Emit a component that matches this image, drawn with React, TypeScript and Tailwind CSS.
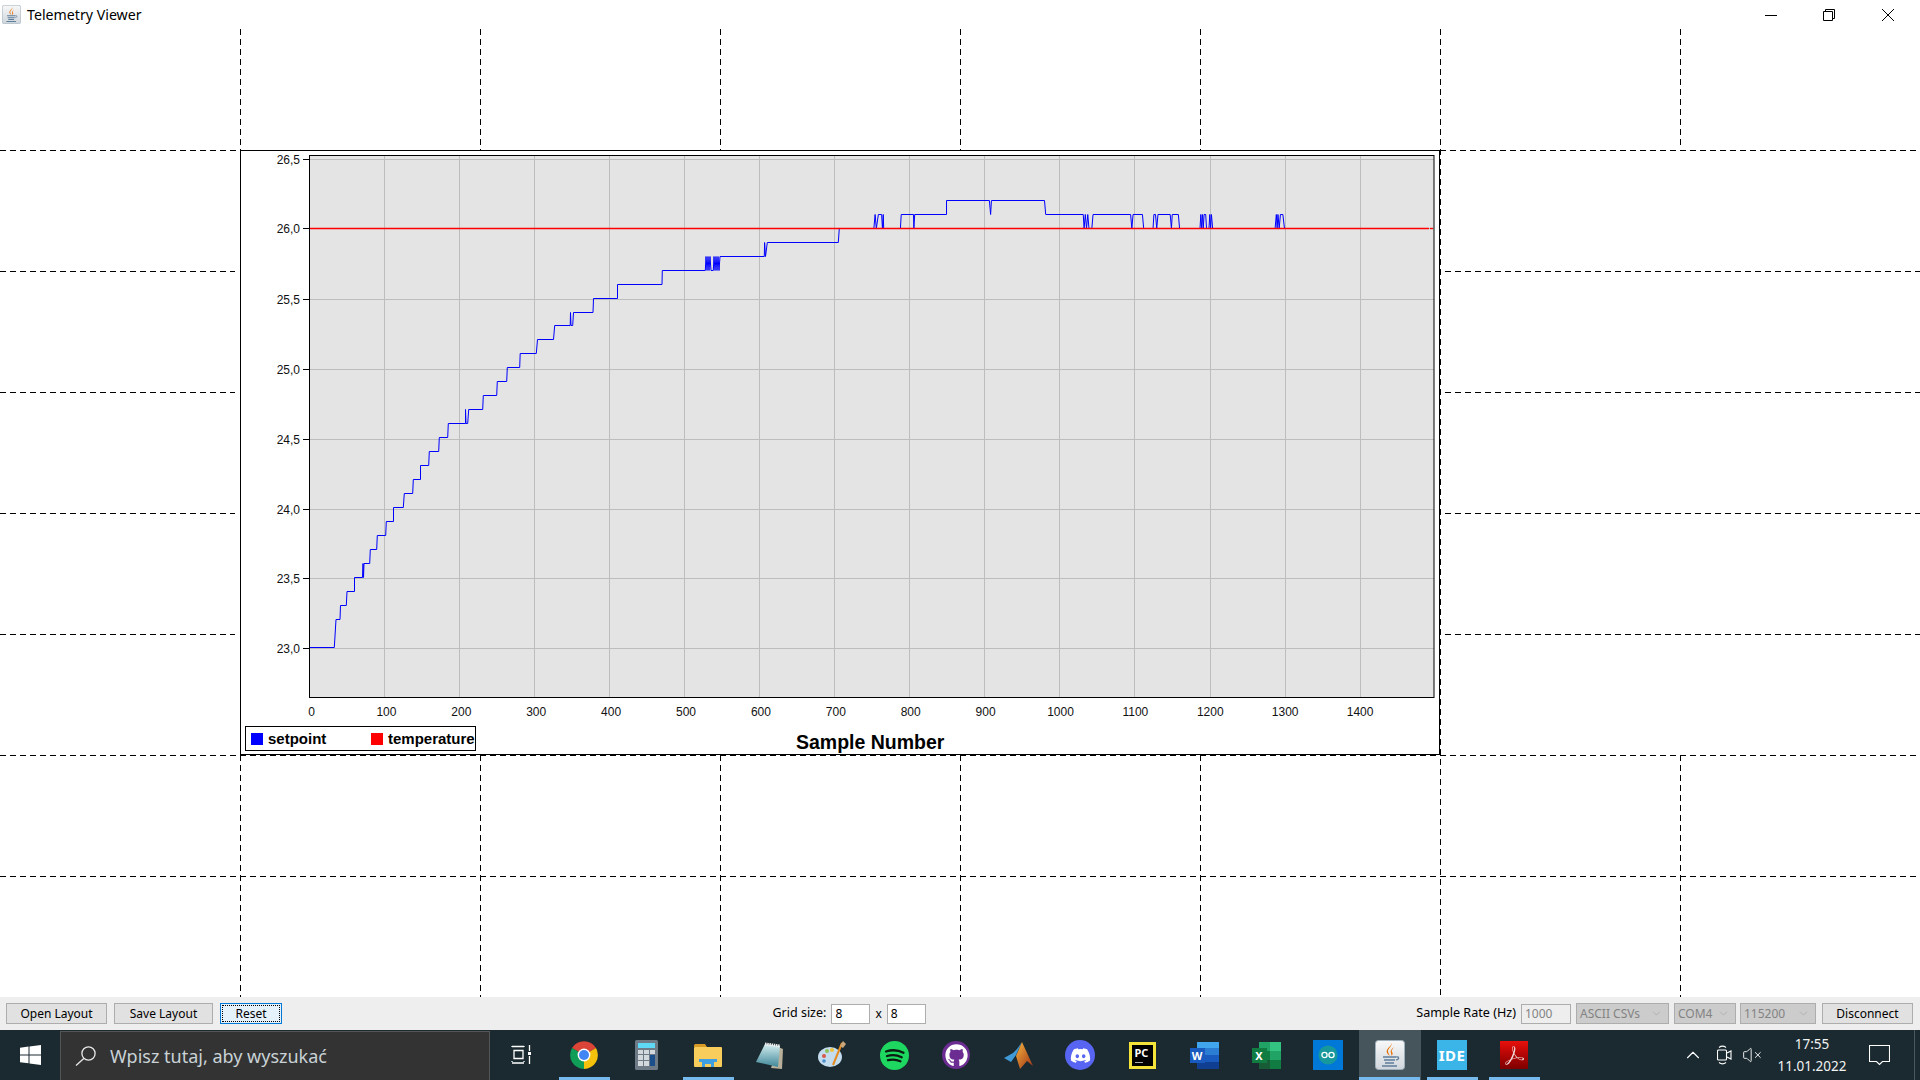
import { ChevronDown, ChevronUp, VolumeX } from "lucide-react";
import { FaDiscord, FaGithub } from "react-icons/fa";
import { SiAdobeacrobatreader } from "react-icons/si";
import type { ReactNode } from "react";

// helpers for the telemetry trace
const ky = (k: number) => Math.floor(647.3 - 13.97 * k) + 0.5;
const z3 = (p: number) => 820 + p / 2.45;

const lowerTrace: [number, number][] = [
  [309.5, 0], [334.3, 0], [336, 2], [340, 2], [340.5, 3], [346.3, 3], [347, 4], [354.5, 4], [354.5, 5],
  [362.5, 5], [363, 6], [363.5, 5], [364, 6], [369.7, 6], [370.3, 7], [376.7, 7], [377.3, 8], [385.7, 8],
  [386.3, 9], [393.5, 9], [393.5, 10], [403.3, 10], [404.3, 11], [412.7, 11], [413.3, 12], [420.5, 12],
  [420.5, 13], [428.7, 13], [429.3, 14], [438.7, 14], [439.3, 15], [447.7, 15], [448.3, 16], [465.5, 16],
  [465.5, 17], [466, 16], [467.7, 16], [468.7, 17], [482.7, 17], [483.3, 18], [496.7, 18], [497.3, 19],
  [506.7, 19], [507.3, 20], [519.7, 20], [520.2, 21], [536.3, 21], [537.5, 22], [553.5, 22], [554.7, 23],
  [570.2, 23], [570.5, 24], [571, 23], [572.7, 23], [573.5, 24], [593, 24], [593.5, 25], [617.5, 25],
  [617.5, 26], [662, 26], [662.3, 27], [705.3, 27], [706, 28], [707, 27], [708, 28], [709, 27],
  [710, 28], [711, 27], [713.3, 27], [714, 28], [715, 27], [716, 28], [717, 27], [718, 28], [719, 27], [720, 28],
  [764.3, 28], [764.6, 29], [765.5, 28], [767.3, 29], [838.3, 29], [839.3, 30],
];

const upperTrace: [number, number][] = [
  [132, 30], [135, 31], [138, 30], [143, 31], [151, 31], [153, 30], [155, 31], [156, 30], [197, 30], [199, 31],
  [229, 31], [230, 30], [232, 31], [310, 31], [310, 32], [415, 32], [418, 31], [420, 32], [550, 32], [553, 31],
  [645, 31], [647, 30], [650, 31], [653, 30], [656, 31], [659, 30], [666, 30], [669, 31], [761, 31], [764, 30],
  [767, 31], [790, 31], [793, 30], [816, 30], [818, 31], [822, 31], [825, 30], [828, 31], [858, 31], [861, 30],
  [863, 31], [878, 31], [881, 30], [931, 30], [933, 31], [935, 30], [937, 31], [939, 30], [941, 31], [945, 31],
  [947, 30], [953, 30], [955, 31], [957, 30], [959, 31], [962, 30], [1115, 30], [1118, 31], [1120, 30], [1122, 31],
  [1125, 30], [1128, 31], [1134, 31], [1138, 30], [1490, 30],
];

const tracePoints = [
  ...lowerTrace.map(([x, k]) => `${x},${ky(k)}`),
  ...upperTrace.map(([p, k]) => `${z3(p)},${ky(k)}`),
].join(" ");

const yTicks = [
  { label: "26,5", y: 159.5 },
  { label: "26,0", y: 228.5 },
  { label: "25,5", y: 299.5 },
  { label: "25,0", y: 369.5 },
  { label: "24,5", y: 439.5 },
  { label: "24,0", y: 509.5 },
  { label: "23,5", y: 578.5 },
  { label: "23,0", y: 648.5 },
];
const xTicks = [0, 100, 200, 300, 400, 500, 600, 700, 800, 900, 1000, 1100, 1200, 1300, 1400];

function GridLines() {
  const segs = [
    // horizontals
    [0, 150, 240, 150], [1440, 150, 1920, 150],
    [0, 271, 235, 271], [1445, 271, 1920, 271],
    [0, 392, 235, 392], [1445, 392, 1920, 392],
    [0, 513, 235, 513], [1445, 513, 1920, 513],
    [0, 634, 235, 634], [1445, 634, 1920, 634],
    [0, 755, 1920, 755], [0, 876, 1920, 876],
    // verticals
    [240, 29, 240, 150], [480, 29, 480, 150], [720, 29, 720, 150], [960, 29, 960, 150], [1200, 29, 1200, 150],
    [1440, 29, 1440, 997], [1680, 29, 1680, 146],
    [240, 755, 240, 997], [480, 755, 480, 997], [720, 755, 720, 997], [960, 755, 960, 997], [1200, 755, 1200, 997],
    [1680, 755, 1680, 997],
  ];
  return (
    <svg className="absolute inset-0 w-full h-full" viewBox="0 29 1920 968">
      {segs.map(([x1, y1, x2, y2], i) => (
        <line
          key={i}
          x1={x1 === x2 ? x1 + 0.5 : x1}
          y1={y1 === y2 ? y1 + 0.5 : y1}
          x2={x1 === x2 ? x2 + 0.5 : x2}
          y2={y1 === y2 ? y2 + 0.5 : y2}
          stroke="#000"
          strokeDasharray="6 4"
        />
      ))}
    </svg>
  );
}

function ChartPanel() {
  return (
    <div className="relative col-start-2 col-span-5 row-start-2 row-span-5 bg-white border border-black">
      <svg className="absolute -inset-px block w-[1200px] h-[605px]" viewBox="240 150 1200 605">
        <rect x="309.5" y="155.5" width="1124.5" height="542" fill="#e4e4e4" />
        {yTicks.map((t) => (
          <g key={t.label}>
            <line x1="310" x2="1434" y1={t.y} y2={t.y} stroke="#bdbdbd" />
            <line x1="303" x2="310" y1={t.y} y2={t.y} stroke="#000" />
            <text x="300" y={t.y + 4} textAnchor="end" fontSize="12" fill="#111">
              {t.label}
            </text>
          </g>
        ))}
        {xTicks.map((n) => {
          const x = Math.floor(309.4 + 0.7505 * n) + 0.5;
          return (
            <g key={n}>
              <line x1={x} x2={x} y1="156" y2="697" stroke="#bdbdbd" />
              <text x={311.5 + 0.749 * n} y="716" textAnchor="middle" fontSize="12" fill="#111">
                {n}
              </text>
            </g>
          );
        })}
        <polyline points={tracePoints} fill="none" stroke="#0000ff" strokeWidth="1" />
        <line x1="310" x2="1429" y1="228.5" y2="228.5" stroke="#ff0000" strokeWidth="1.4" />
        <line x1="1430" x2="1433" y1="228.5" y2="228.5" stroke="#ff0000" strokeWidth="1.4" />
        <rect x="309.5" y="155.5" width="1124.5" height="542" fill="none" stroke="#000" />
      </svg>
      {/* legend + axis title sit on top of the plot svg */}
      <div className="absolute left-[4px] top-[575px] w-[231px] h-[25px] flex items-center border border-black bg-white font-bold text-[15px] text-black">
        <span className="w-[12px] h-[12px] bg-[#0000ff] ml-[5px]" />
        <span className="ml-[5px] w-[103px] pt-px">setpoint</span>
        <span className="w-[12px] h-[12px] bg-[#ff0000]" />
        <span className="ml-[5px] pt-px whitespace-nowrap">temperature</span>
      </div>
      <div className="absolute left-[555px] top-[579px] font-bold text-[19.5px] leading-[24px] text-black whitespace-nowrap">
        Sample Number
      </div>
    </div>
  );
}

function JavaIcon({ size }: { size: number }) {
  return (
    <svg width={size} height={size} viewBox="0 0 30 30">
      <defs>
        <linearGradient id={`jv${size}`} x1="0" y1="0" x2="0" y2="1">
          <stop offset="0" stopColor="#f8f8f8" />
          <stop offset="1" stopColor="#cfd6dc" />
        </linearGradient>
      </defs>
      <rect x="0.5" y="0.5" width="29" height="29" rx="3" fill={`url(#jv${size})`} stroke="#9fb0bd" />
      <path d="M16 3c2 3-3 5-3 8 0 2 1 3 2 5-3-2-4-4-3-6 1-3 5-4 4-7z" fill="#e76f00" />
      <path d="M19 7c-2 2-4 3-3 6 0 1 1 2 0 3 2-1 2-3 1-4-1-2 1-3 2-5z" fill="#e76f00" />
      <path d="M8 17h13M9 20h11M10 23h9M7 26h15" stroke="#5e7e9a" strokeWidth="1.6" fill="none" />
      <path d="M21 17c3-1 4 2 0 3" stroke="#5e7e9a" strokeWidth="1.2" fill="none" />
    </svg>
  );
}

function ToolButton({ children, className }: { children: ReactNode; className: string }) {
  return (
    <button className={`h-[21px] bg-[#e1e1e1] border border-[#adadad] text-[12px] leading-none text-black ${className}`}>
      {children}
    </button>
  );
}

function DisabledSelect({ value, className }: { value: string; className: string }) {
  return (
    <div className={`h-[21px] flex items-center justify-between pl-[3px] pr-[5px] bg-[#cccccc] border border-[#adadad] text-[12px] text-[#838383] ${className}`}>
      <span>{value}</span>
      <ChevronDown size={13} strokeWidth={1} color="#9a9a9a" />
    </div>
  );
}

function TaskItem({ children, running, active }: { children: ReactNode; running?: boolean; active?: boolean }) {
  return (
    <div className={`relative w-[62px] h-[50px] flex items-center justify-center ${active ? "bg-[#46555b]" : ""}`}>
      {children}
      {running && (
        <span className={`absolute bottom-0 h-[3px] bg-[#76b9ed] ${active ? "left-0 w-[61px]" : "left-[6px] w-[51px]"}`} />
      )}
    </div>
  );
}

function Toolbar() {
  return (
    <div className="h-[33px] shrink-0 bg-[#eeeeee] flex items-center justify-between pl-[6px] pr-[7px] text-[12px] text-black">
      <div className="flex items-center gap-[7px]">
        <ToolButton className="w-[101px]">Open Layout</ToolButton>
        <ToolButton className="w-[99px]">Save Layout</ToolButton>
        <div className="w-[62px] h-[21px] p-[1px] bg-[#e5f1fb] border border-[#0078d7] flex">
          <div className="flex-1 border border-dotted border-black flex items-center justify-center leading-none">Reset</div>
        </div>
      </div>
      <div className="flex items-center">
        <span className="mr-[5px] text-[12.5px]">Grid size:</span>
        <div className="w-[39px] h-[20px] bg-white border border-[#adadad] pl-[3px] leading-[18px]">8</div>
        <span className="mx-[5px]">x</span>
        <div className="w-[39px] h-[20px] bg-white border border-[#adadad] pl-[3px] leading-[18px]">8</div>
      </div>
      <div className="flex items-center gap-[5px]">
        <span className="text-[12.6px]">Sample Rate (Hz)</span>
        <div className="w-[50px] h-[20px] bg-[#eeeeee] border border-[#adadad] pl-[3px] leading-[18px] text-[#838383]">1000</div>
        <DisabledSelect value="ASCII CSVs" className="w-[93px]" />
        <DisabledSelect value="COM4" className="w-[62px] -mr-px" />
        <DisabledSelect value="115200" className="w-[76px] mr-[1px]" />
        <ToolButton className="w-[91px]">Disconnect</ToolButton>
      </div>
    </div>
  );
}

function Taskbar() {
  return (
    <div className="h-[50px] shrink-0 bg-[#1b2a30] flex items-stretch relative">
      <div className="w-[60px] flex items-center justify-center">
        <svg width="21" height="20" viewBox="0 0 21 20" fill="#fff">
          <polygon points="0,2.8 8.5,1.6 8.5,9.4 0,9.4" />
          <polygon points="9.5,1.4 21,0 21,9.4 9.5,9.4" />
          <polygon points="0,10.4 8.5,10.4 8.5,18.3 0,17.2" />
          <polygon points="9.5,10.4 21,10.4 21,20 9.5,18.5" />
        </svg>
      </div>
      <div className="w-[430px] mt-px bg-[#333333] border-t border-x border-[#555555] flex items-center">
        <svg className="ml-[14px]" width="21" height="20" viewBox="0 0 21 20" fill="none" stroke="#e8e8e8" strokeWidth="1.3">
          <circle cx="13.5" cy="7.5" r="6.6" />
          <path d="M8.8 12.5L1 19.5" />
        </svg>
        <span className="ml-[14px] text-[18px] text-[#c9d2d6] whitespace-nowrap">Wpisz tutaj, aby wyszukać</span>
      </div>
      <div className="w-[63px] pr-[2px] flex items-center justify-center">
        <svg width="20" height="20" viewBox="0 0 20 20" fill="none" stroke="#fff" strokeWidth="1.3">
          <path d="M1 1.5h12M3 5.5h9v8H3zM1 18h12M1 17v-1M13 17v-1M1 1v1M13 1v1" />
          <path d="M18.5 0v6M18.5 11v8" />
          <rect x="17" y="7" width="3" height="3" fill="#fff" stroke="none" />
        </svg>
      </div>
      <TaskItem running>
        <svg width="28" height="28" viewBox="0 0 28 28">
          <path d="M14 14L2 7A14 14 0 0 1 26 7Z" fill="#db4437" />
          <path d="M14 14L2 7A14 14 0 0 0 14 28Z" fill="#0f9d58" />
          <path d="M14 14L26 7A14 14 0 0 1 14 28Z" fill="#f4c20d" />
          <circle cx="14" cy="14" r="6.4" fill="#fff" />
          <circle cx="14" cy="14" r="5" fill="#4285f4" />
        </svg>
      </TaskItem>
      <TaskItem>
        <svg width="23" height="30" viewBox="0 0 23 30">
          <rect width="23" height="30" rx="1.5" fill="#6e7a85" />
          <rect x="3" y="3" width="17" height="5" fill="#5fd8f5" />
          <path d="M3 10h5v4H3zM9 10h5v4H9zM15 10h5v4h-5zM3 15h5v5H3zM9 15h5v5H9zM3 21h5v5H3zM9 21h5v5H9z" fill="#d3d8dc" />
          <rect x="15" y="15" width="5" height="11" fill="#1b4f8c" />
        </svg>
      </TaskItem>
      <TaskItem running>
        <svg width="28" height="23" viewBox="0 0 28 23">
          <path d="M0 1.5A1.5 1.5 0 0 1 1.5 0H11l2 3h-13z" fill="#d69a25" />
          <rect y="3" width="28" height="20" rx="1" fill="#f8cd5c" />
          <path d="M8 23v-6h12v6h-3v-3h-6v3z" fill="#3f9fe0" />
          <rect x="5" y="15" width="18" height="3" fill="#3f9fe0" />
        </svg>
      </TaskItem>
      <TaskItem>
        <svg className="-ml-[2px]" width="27" height="27" viewBox="0 0 27 27">
          <defs>
            <linearGradient id="np" x1="0" y1="0" x2="0" y2="1">
              <stop offset="0" stopColor="#d5eef0" />
              <stop offset="1" stopColor="#3f8799" />
            </linearGradient>
          </defs>
          <polygon points="22,5 27,7 26,27 15,26" fill="#b8b09a" />
          <polygon points="9,2 24,4 22,25 0,20" fill="url(#np)" />
          <path d="M9 2l15 2" stroke="#eeeeee" strokeWidth="3" strokeDasharray="1.5 0.7" />
        </svg>
      </TaskItem>
      <TaskItem>
        <svg width="28" height="28" viewBox="0 0 28 28">
          <ellipse cx="12" cy="16" rx="12" ry="10" fill="#c3dcee" />
          <circle cx="6" cy="15" r="2" fill="#d8584d" />
          <circle cx="9" cy="10" r="2" fill="#8fc25a" />
          <circle cx="14" cy="9" r="2" fill="#f0c23c" />
          <circle cx="6" cy="20" r="1.8" fill="#4c8fd0" />
          <path d="M24 2L15 24" stroke="#e58a1f" strokeWidth="2" />
          <path d="M22 5l3-5 3 3-3 4z" fill="#c9a77a" />
        </svg>
      </TaskItem>
      <TaskItem>
        <svg width="29" height="29" viewBox="0 0 29 29">
          <circle cx="14.5" cy="14.5" r="14.5" fill="#1ed760" />
          <path d="M6 10.5c6-2 12-1.6 17.5 1.2M7 15c5-1.5 10-1.1 14.7 1.2M8 19.2c4.4-1.2 8.4-.8 12.4 1.1" stroke="#0c1a10" strokeWidth="2.3" strokeLinecap="round" fill="none" />
        </svg>
      </TaskItem>
      <TaskItem>
        <div className="w-[28px] h-[28px] rounded-full bg-[#6b2d91] flex items-center justify-center">
          <FaGithub size={23} color="#fff" />
        </div>
      </TaskItem>
      <TaskItem>
        <svg width="29" height="27" viewBox="0 0 29 27">
          <defs>
            <linearGradient id="ml" x1="0" y1="0" x2="1" y2="1">
              <stop offset="0" stopColor="#f7b43e" />
              <stop offset="1" stopColor="#9c2f14" />
            </linearGradient>
          </defs>
          <polygon points="0,16 9,11 13,7 18,0 12,13 7,20" fill="#3f9ad6" />
          <polygon points="18,0 29,24 23,19 16,27 12,14" fill="url(#ml)" />
        </svg>
      </TaskItem>
      <TaskItem>
        <div className="w-[30px] h-[30px] rounded-full bg-[#5865f2] flex items-center justify-center">
          <FaDiscord size={21} color="#fff" />
        </div>
      </TaskItem>
      <TaskItem>
        <div className="w-[27px] h-[27px] border-[3px] border-[#f5e33a] bg-black relative">
          <span className="absolute left-[3px] top-[1px] text-[11px] leading-[13px] font-bold text-white">PC</span>
          <span className="absolute left-[3px] bottom-[3px] w-[8px] h-[1px] bg-[#aaaaaa]" />
        </div>
      </TaskItem>
      <TaskItem>
        <div className="relative w-[29px] h-[27px]">
          <div className="absolute right-0 top-0 w-[22px] h-[27px] flex flex-col">
            <span className="flex-1 bg-[#41a5ee]" />
            <span className="flex-1 bg-[#2b7cd3]" />
            <span className="flex-1 bg-[#185abd]" />
            <span className="flex-1 bg-[#103f91]" />
          </div>
          <span className="absolute left-0 top-[6px] w-[15px] h-[15px] bg-[#185abd] text-white text-[11px] leading-[15px] font-bold text-center">W</span>
        </div>
      </TaskItem>
      <TaskItem>
        <div className="relative w-[29px] h-[27px]">
          <div className="absolute right-0 top-0 w-[22px] h-[27px] grid grid-cols-2 grid-rows-3">
            <span className="bg-[#21a366]" />
            <span className="bg-[#33c481]" />
            <span className="bg-[#107c41]" />
            <span className="bg-[#21a366]" />
            <span className="bg-[#185c37]" />
            <span className="bg-[#107c41]" />
          </div>
          <span className="absolute left-0 top-[6px] w-[15px] h-[15px] bg-[#107c41] text-white text-[11px] leading-[15px] font-bold text-center">X</span>
        </div>
      </TaskItem>
      <TaskItem>
        <div className="w-[30px] h-[30px] bg-[#0078d7] flex items-center justify-center">
          <svg width="20" height="20" viewBox="0 0 20 20">
            <circle cx="10" cy="10" r="9.5" fill="#17989c" />
            <circle cx="6.5" cy="10" r="2.6" fill="none" stroke="#fff" strokeWidth="1.3" />
            <circle cx="13.5" cy="10" r="2.6" fill="none" stroke="#fff" strokeWidth="1.3" />
          </svg>
        </div>
      </TaskItem>
      <TaskItem running active>
        <JavaIcon size={30} />
      </TaskItem>
      <TaskItem running>
        <div className="w-[30px] h-[30px] bg-[#3bb4e8] flex items-center justify-center text-white text-[15px] font-bold tracking-[0.5px]">IDE</div>
      </TaskItem>
      <TaskItem running>
        <div className="w-[28px] h-[28px] bg-gradient-to-b from-[#e8100c] to-[#7e0000] flex items-center justify-center">
          <SiAdobeacrobatreader size={19} color="#f3dcdc" />
        </div>
      </TaskItem>

      <div className="flex-1 flex items-center text-white">
        <ChevronUp size={22} strokeWidth={1.2} className="ml-[137px]" />
        <svg className="ml-[13px]" width="15" height="20" viewBox="0 0 15 20" fill="none" stroke="#fff" strokeWidth="1.1">
          <rect x="0.5" y="5" width="9" height="10" rx="1" />
          <path d="M10 8l4-2v8l-4-2M2 2.5c2-1.5 5-1.5 7 0M2 17.5c2 1.5 5 1.5 7 0" />
        </svg>
        <VolumeX size={20} strokeWidth={1.1} className="ml-[10px]" />
        <div className="ml-[12px] w-[76px] text-center text-[13.5px] leading-[22px] text-[#f2f2f2]">
          <div>17:55</div>
          <div>11.01.2022</div>
        </div>
        <svg className="ml-[19px]" width="21" height="21" viewBox="0 0 21 21" fill="none" stroke="#fff" strokeWidth="1.1">
          <path d="M0.5 0.5h20v16h-7l-3 3-3-3h-7z" />
        </svg>
      </div>
      <span className="absolute right-[5px] top-0 h-full w-px bg-[#4a585e]" />
    </div>
  );
}

export default function App() {
  return (
    <div className="w-[1920px] h-[1080px] flex flex-col bg-white overflow-hidden font-['Noto_Sans',sans-serif]">
      <div className="h-[29px] shrink-0 flex items-center relative text-black">
        <span className="ml-[2px]">
          <JavaIcon size={19} />
        </span>
        <span className="ml-[6px] text-[14.2px]">Telemetry Viewer</span>
        <div className="ml-auto flex items-center">
          <svg className="mr-[46px]" width="12" height="12" viewBox="0 0 12 12" stroke="#000">
            <path d="M0 6.5h12" />
          </svg>
          <svg className="mr-[47px]" width="12" height="12" viewBox="0 0 12 12" fill="none" stroke="#000">
            <path d="M0.5 2.5h9v9h-9zM2.5 2.5v-2h9v9h-2" />
          </svg>
          <svg className="mr-[26px]" width="12" height="12" viewBox="0 0 12 12" stroke="#000">
            <path d="M0 0l12 12M12 0L0 12" />
          </svg>
        </div>
      </div>
      <div className="relative flex-1 grid grid-cols-[repeat(8,240px)] grid-rows-[repeat(8,121px)] font-['Liberation_Sans',sans-serif]">
        <GridLines />
        <ChartPanel />
      </div>
      <Toolbar />
      <Taskbar />
    </div>
  );
}
